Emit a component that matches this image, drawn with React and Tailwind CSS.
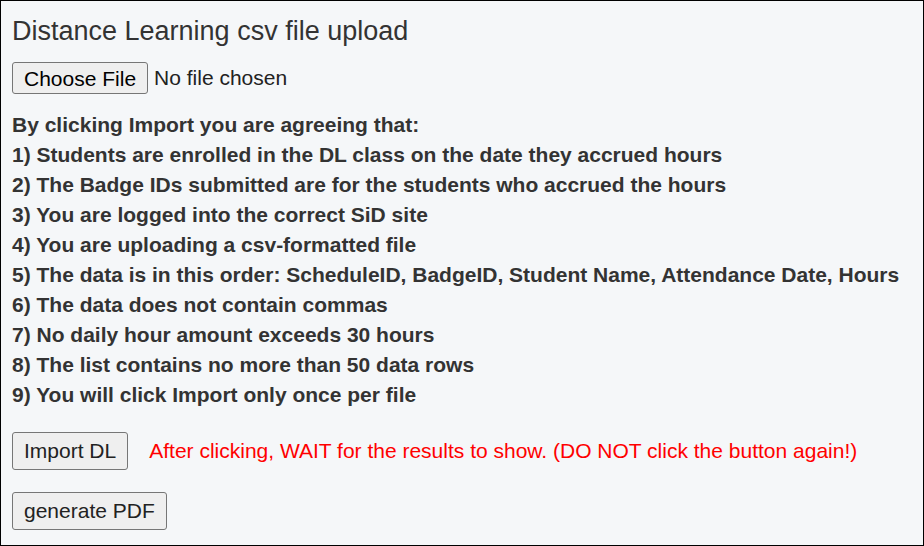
import React from 'react';

const rules = [
  '1) Students are enrolled in the DL class on the date they accrued hours',
  '2) The Badge IDs submitted are for the students who accrued the hours',
  '3) You are logged into the correct SiD site',
  '4) You are uploading a csv-formatted file',
  '5) The data is in this order: ScheduleID, BadgeID, Student Name, Attendance Date, Hours',
  '6) The data does not contain commas',
  '7) No daily hour amount exceeds 30 hours',
  '8) The list contains no more than 50 data rows',
  '9) You will click Import only once per file',
];

const btn = 'bg-[#efefef] border border-[#767676] rounded-[3px] text-[21px] text-[#222]';

const App = () => {
  return (
    <div className="w-[924px] h-[546px] bg-[#f5f7f9] border border-black font-['Liberation_Sans',Arial,sans-serif] text-[#333] px-[11px] pt-[14px]">
      <h1 className="text-[27px] leading-[32px]">Distance Learning csv file upload</h1>
      <div className="flex items-center mt-[15px]">
        <button className={`${btn} text-black h-[32px] px-[11px]`}>Choose File</button>
        <span className="ml-[6px] text-[21px] text-[#222]">No file chosen</span>
      </div>
      <div className="mt-[16px] font-bold text-[21px] leading-[30px]">
        <p>By clicking Import you are agreeing that:</p>
        {rules.map((r) => (
          <p key={r}>{r}</p>
        ))}
      </div>
      <div className="flex items-center mt-[22px]">
        <button className={`${btn} h-[38px] px-[11px]`}>Import DL</button>
        <span className="ml-[21px] text-[21px] text-[#ff0000]">
          After clicking, WAIT for the results to show. (DO NOT click the button again!)
        </span>
      </div>
      <button className={`${btn} h-[38px] px-[11px] mt-[22px]`}>generate PDF</button>
    </div>
  );
};

export default App;
